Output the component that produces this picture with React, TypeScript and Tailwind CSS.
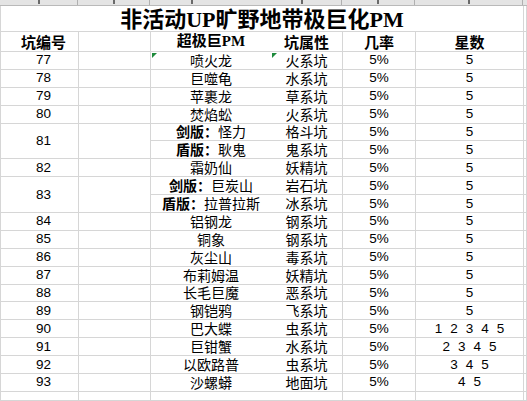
import { Fragment, type ReactNode } from "react"

const LINE = "border-[#d6d6d6]"
const CJK = "font-['Noto_Sans_CJK_SC',sans-serif]"
const NUM = "font-['Liberation_Sans','Noto_Sans_CJK_SC',sans-serif]"

type Sub = { name: ReactNode; type: string; stars: string[]; tone?: string; rateTone?: string }
type Row = { no: string; subs: Sub[] }

const five = ["5"]

function Versioned({ label, name }: { label: string; name: string }) {
  return (
    <span>
      <span className="font-bold">{label}：</span>
      {name}
    </span>
  )
}

const rows: Row[] = [
  { no: "77", subs: [{ name: "喷火龙", type: "火系坑", stars: five }] },
  { no: "78", subs: [{ name: "巨噬龟", type: "水系坑", stars: five }] },
  { no: "79", subs: [{ name: "苹裹龙", type: "草系坑", stars: five }] },
  { no: "80", subs: [{ name: "焚焰蚣", type: "火系坑", stars: five }] },
  {
    no: "81",
    subs: [
      { name: <Versioned label="剑版" name="怪力" />, type: "格斗坑", stars: five },
      { name: <Versioned label="盾版" name="耿鬼" />, type: "鬼系坑", stars: five },
    ],
  },
  { no: "82", subs: [{ name: "霜奶仙", type: "妖精坑", stars: five }] },
  {
    no: "83",
    subs: [
      { name: <Versioned label="剑版" name="巨炭山" />, type: "岩石坑", stars: five },
      { name: <Versioned label="盾版" name="拉普拉斯" />, type: "冰系坑", stars: five },
    ],
  },
  { no: "84", subs: [{ name: "铝钢龙", type: "钢系坑", stars: five }] },
  { no: "85", subs: [{ name: "铜象", type: "钢系坑", stars: five }] },
  { no: "86", subs: [{ name: "灰尘山", type: "毒系坑", stars: five }] },
  { no: "87", subs: [{ name: "布莉姆温", type: "妖精坑", stars: five }] },
  { no: "88", subs: [{ name: "长毛巨魔", type: "恶系坑", stars: five }] },
  { no: "89", subs: [{ name: "钢铠鸦", type: "飞系坑", stars: five }] },
  { no: "90", subs: [{ name: "巴大蝶", type: "虫系坑", stars: ["1", "2", "3", "4", "5"] }] },
  { no: "91", subs: [{ name: "巨钳蟹", type: "水系坑", stars: ["2", "3", "4", "5"] }] },
  { no: "92", subs: [{ name: "以欧路普", type: "虫系坑", stars: ["3", "4", "5"], tone: "text-[#3a3a3a]" }] },
  {
    no: "93",
    subs: [{ name: "沙螺蟒", type: "地面坑", stars: ["4", "5"], tone: "text-[#a8a8a8]", rateTone: "text-[#555]" }],
  },
]

function Cell({
  children,
  className = "",
  right = true,
  middle = false,
}: {
  children?: ReactNode
  className?: string
  right?: boolean
  middle?: boolean
}) {
  return (
    <div
      className={`relative flex justify-center border-b ${right ? "border-r" : ""} ${LINE} ${
        middle ? "items-center" : "items-end pb-[2px]"
      } leading-none text-black ${className}`}
    >
      {children}
    </div>
  )
}

function Corner() {
  return (
    <span className="absolute left-[1px] top-[1px] h-0 w-0 border-r-[5px] border-t-[5px] border-r-transparent border-t-[#1e8a3c]" />
  )
}

function Tick() {
  return <span className="h-[4px] w-[2px] bg-[#6a6a6a]" />
}

export default function App() {
  return (
    <div className="h-[401px] w-[527px] overflow-hidden bg-white">
      {/* column header strip, cut off at the top */}
      <div className="flex h-[6px] border-b border-[#b9b9b9] bg-[#e4e4e4]">
        <div className="flex w-[78px] justify-center border-r border-[#b0b0b0]">
          <Tick />
        </div>
        <div className="flex w-[72px] justify-center border-r border-[#b0b0b0]">
          <Tick />
        </div>
        <div className="flex w-[192px] gap-[108px] border-r border-[#b0b0b0] pl-[41px]">
          <Tick />
          <Tick />
        </div>
        <div className="flex w-[73px] justify-center border-r border-[#b0b0b0]">
          <Tick />
        </div>
        <div className="flex w-[108px] justify-center border-r border-[#b0b0b0]">
          <Tick />
        </div>
        <div className="flex-1" />
      </div>

      <div
        className={`grid h-[395px] grid-cols-[78px_72px_120px_72px_73px_108px_1fr] grid-rows-[26px_20px_repeat(19,17.9px)_1fr] border-l ${LINE}`}
      >
        <div
          className={`col-span-6 flex items-end justify-center border-b border-r ${LINE} text-[22px] font-bold leading-none text-black font-['Liberation_Serif','Noto_Sans_CJK_SC',serif]`}
        >
          非活动UP旷野地带极巨化PM
        </div>
        <Cell />

        <Cell className={`${CJK} pl-[8px] text-[15px] font-bold`}>坑编号</Cell>
        <Cell />
        <Cell right={false} className="text-[15px] font-bold font-['Liberation_Serif','Noto_Sans_CJK_SC',serif]">
          超极巨PM
        </Cell>
        <Cell className={`${CJK} text-[15px] font-bold`}>坑属性</Cell>
        <Cell className={`${CJK} text-[15px] font-bold`}>几率</Cell>
        <Cell className={`${CJK} text-[15px] font-bold`}>星数</Cell>
        <Cell />

        {rows.map((row, ri) => {
          const span = row.subs.length === 2
          return row.subs.map((s, si) => (
            <Fragment key={`${row.no}-${si}`}>
              {si === 0 && (
                <Cell middle={span} className={`${NUM} pl-[8px] text-[13.5px] ${span ? "row-span-2" : ""}`}>
                  {row.no}
                </Cell>
              )}
              {si === 0 && <Cell className={span ? "row-span-2" : ""} />}
              <Cell right={false} className={`${CJK} text-[14px]`}>
                {ri === 0 && <Corner />}
                {s.name}
              </Cell>
              <Cell className={`${CJK} text-[14px]`}>
                {ri === 0 && <Corner />}
                {s.type}
              </Cell>
              <Cell className={`${NUM} text-[13.5px] ${s.rateTone ?? ""}`}>5%</Cell>
              <Cell className={`${NUM} gap-[8px] text-[13.5px] ${s.tone ?? ""}`}>
                {s.stars.map((d) => (
                  <span key={d}>{d}</span>
                ))}
              </Cell>
              <Cell />
            </Fragment>
          ))
        })}

        <Cell />
        <Cell />
        <Cell right={false} />
        <Cell />
        <Cell />
        <Cell />
        <Cell />
      </div>
    </div>
  )
}
